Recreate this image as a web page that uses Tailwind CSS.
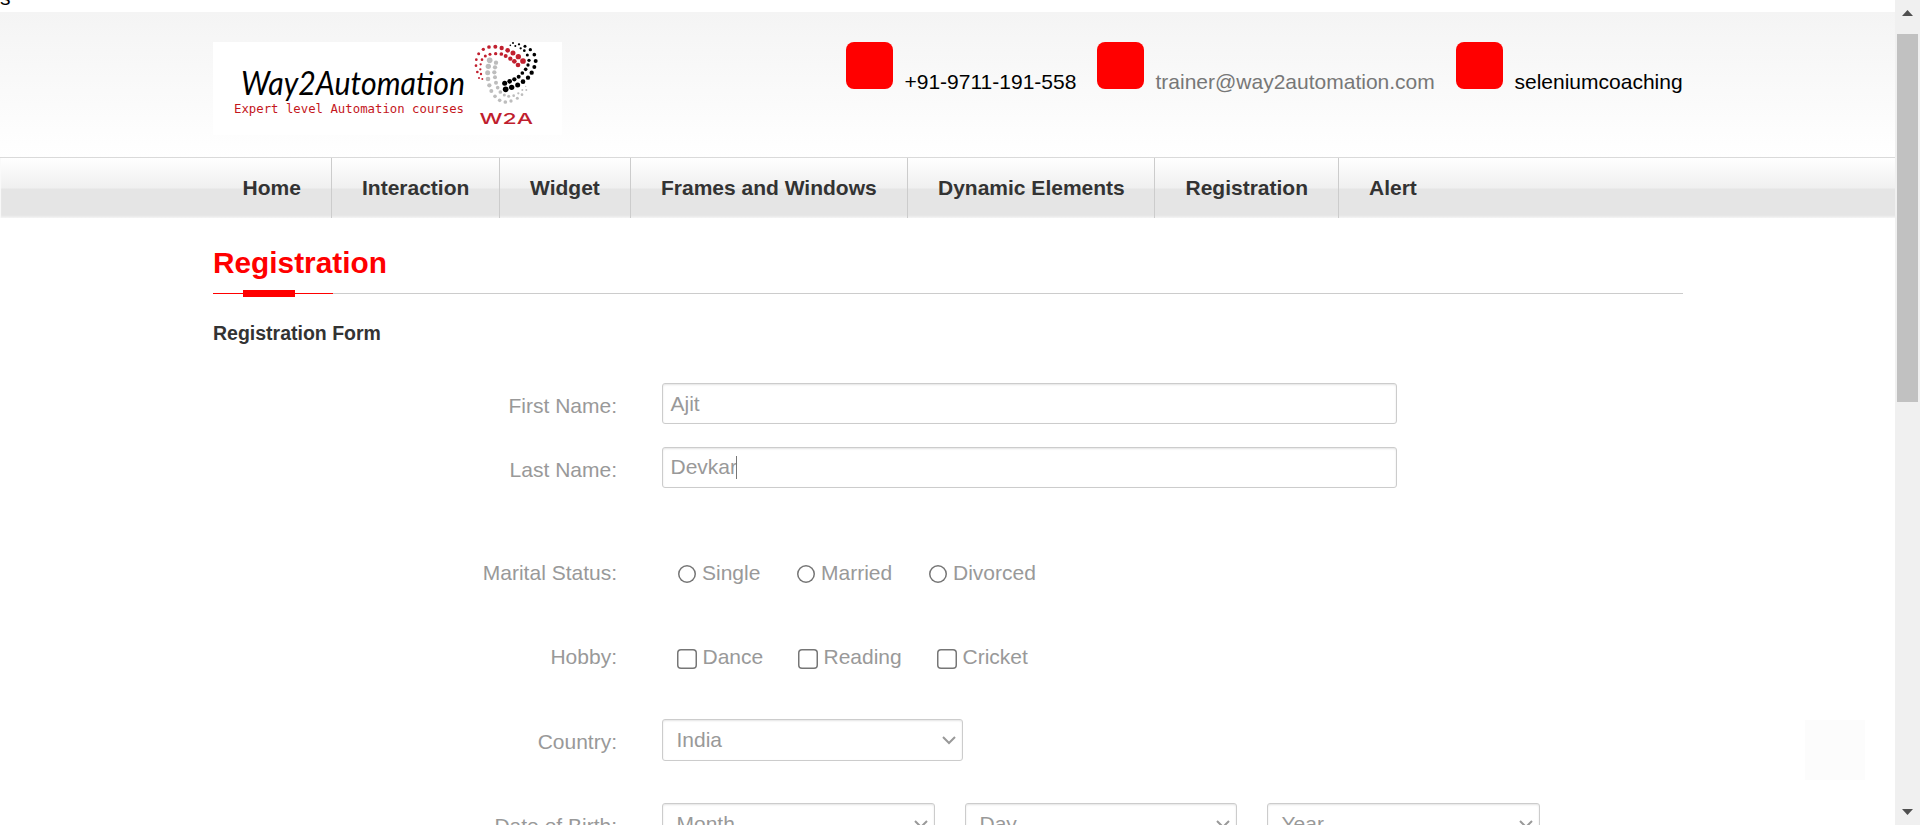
<!DOCTYPE html>
<html lang="en">
<head>
<meta charset="utf-8">
<title>Registration</title>
<script src="https://cdn.jsdelivr.net/npm/@tailwindcss/browser@4"></script>
</head>
<body class="h-[825px] overflow-hidden bg-white font-['Liberation_Sans',Arial,sans-serif] text-[21px] text-[#999]">
<div class="flex h-[825px]">
  <div class="h-[825px] w-[1895px] overflow-hidden">
    <div class="h-3 overflow-hidden"><p class="-mt-[17px] leading-[30px] text-black">s</p></div>

    <header class="h-[145px] bg-linear-to-b from-[#f4f4f4] to-white pr-[212px] pl-[213px] pt-[30px]">
      <div class="flex justify-between">
        <svg class="h-[93px] w-[349px] bg-white" viewBox="0 0 349 93">
          <text x="28" y="53" font-family="Lato, sans-serif" font-style="italic" font-size="32" textLength="224" lengthAdjust="spacingAndGlyphs" fill="#000">Way2Automation</text>
          <text x="21" y="71" font-family="DejaVu Sans Mono, monospace" font-size="12.2" textLength="230" lengthAdjust="spacingAndGlyphs" fill="#c4161c">Expert level Automation courses</text>
          <g id="dots" transform="translate(227 -12) scale(.33333)"></g>
          <text x="266.5" y="82.3" font-family="Inter, sans-serif" font-size="15.2" font-weight="500" textLength="53.5" lengthAdjust="spacingAndGlyphs" fill="#bf1e2e">W2A</text>
        </svg>
        <div class="flex h-[60px] items-start leading-[30px] whitespace-nowrap text-black">
          <div class="flex w-[251px]"><span class="mr-[11.5px] size-[47px] rounded-lg bg-[#f00]"></span><span class="pt-[25px]">+91-9711-191-558</span></div>
          <div class="flex w-[359px]"><span class="mr-[11.5px] size-[47px] rounded-lg bg-[#f00]"></span><span class="pt-[25px] text-[#777]">trainer@way2automation.com</span></div>
          <div class="flex w-[227px]"><span class="mr-[11.5px] size-[47px] shrink-0 rounded-lg bg-[#f00]"></span><span class="pt-[25px]">seleniumcoaching</span></div>
        </div>
      </div>
    </header>

    <nav class="h-[61px] border-t border-[#dadada] bg-linear-[180deg,#fff_0,#f0f0f0_30px,#e5e5e5_31px,#e5e5e5_57px,#f3f3f3_60px] pl-[213px] shadow-[inset_1px_0_1px_#fafafa]">
      <ul class="flex h-[60px] leading-[60px] font-bold whitespace-nowrap text-[#333]">
        <li class="w-[119px] border-r border-[#ccc] pl-[29.5px]">Home</li>
        <li class="w-[168px] border-r border-[#ccc] pl-[30px]">Interaction</li>
        <li class="w-[131px] border-r border-[#ccc] pl-[30px]">Widget</li>
        <li class="w-[277px] border-r border-[#ccc] pl-[30px]">Frames and Windows</li>
        <li class="w-[247px] border-r border-[#ccc] pl-[30px]">Dynamic Elements</li>
        <li class="w-[184px] border-r border-[#ccc] pl-[30.5px]">Registration</li>
        <li class="pl-[30px]">Alert</li>
      </ul>
    </nav>

    <main class="pr-[212px] pl-[213px]">
      <h1 class="pt-[25px] text-[29.8px] leading-[40px] font-bold text-[#f00]">Registration</h1>
      <div class="mt-[7px] flex h-[7px] items-center">
        <span class="h-px w-[30px] bg-[#f00]"></span><span class="h-[7px] w-[52px] bg-[#f00]"></span><span class="h-px w-[38px] bg-[#f00]"></span><span class="h-px flex-1 bg-[#ccc]"></span>
      </div>
      <h2 class="mt-[21px] text-[19.5px] leading-[30px] font-bold text-[#333]">Registration Form</h2>

      <form class="pt-[35px] leading-[30px]">
        <div class="flex h-16">
          <label class="w-[404px] pt-2 text-right">First Name:</label>
          <div class="ml-[45px] h-[41px] w-[735px] rounded-[3px] border border-[#ccc] pl-[7.5px] leading-[39px] shadow-[inset_0_1px_2px_#e4e4e4]">Ajit</div>
        </div>
        <div class="flex h-[111px]">
          <label class="w-[404px] pt-2 text-right">Last Name:</label>
          <div class="ml-[45px] flex h-[41px] w-[735px] items-center rounded-[3px] border border-[#ccc] pl-[7.5px] leading-[39px] shadow-[inset_0_1px_2px_#e4e4e4]"><span class="-mt-0.5">Devkar</span><span class="-mt-px -ml-px h-[23px] w-px bg-[#777]"></span></div>
        </div>
        <div class="flex h-[84px]">
          <label class="w-[404px] text-right">Marital Status:</label>
          <div class="flex pl-[60px]">
            <div class="flex w-[119px]"><span class="mt-[7px] mr-[6px] ml-px size-[18px] rounded-full shadow-[inset_0_0_0_1.5px_#767676]"></span>Single</div>
            <div class="flex w-[132px]"><span class="mt-[7px] mr-[6px] ml-px size-[18px] rounded-full shadow-[inset_0_0_0_1.5px_#767676]"></span>Married</div>
            <div class="flex"><span class="mt-[7px] mr-[6px] ml-px size-[18px] rounded-full shadow-[inset_0_0_0_1.5px_#767676]"></span>Divorced</div>
          </div>
        </div>
        <div class="flex h-[77px]">
          <label class="w-[404px] text-right">Hobby:</label>
          <div class="flex pl-[60px]">
            <div class="flex w-[121px]"><span class="mt-[7px] mr-[5.5px] size-5 rounded-[4px] shadow-[inset_0_0_0_1.5px_#767676]"></span>Dance</div>
            <div class="flex w-[139px]"><span class="mt-[7px] mr-[5.5px] size-5 rounded-[4px] shadow-[inset_0_0_0_1.5px_#767676]"></span>Reading</div>
            <div class="flex"><span class="mt-[7px] mr-[5.5px] size-5 rounded-[4px] shadow-[inset_0_0_0_1.5px_#767676]"></span>Cricket</div>
          </div>
        </div>
        <div class="flex h-[84px]">
          <label class="w-[404px] pt-2 text-right">Country:</label>
          <div class="ml-[45px] flex h-[42px] w-[301px] items-center justify-between rounded-[3px] border border-[#ccc] pr-[6px] pl-[13.5px] shadow-[inset_0_1px_2px_#e4e4e4]">India<svg class="size-[14px]" viewBox="0 0 14 14" fill="none" stroke="#999" stroke-width="2"><path d="M1 4l6 6 6-6"/></svg></div>
        </div>
        <div class="flex h-[84px]">
          <label class="w-[404px] pt-2 text-right">Date of Birth:</label>
          <div class="ml-[45px] flex gap-[30px]">
            <div class="flex h-[42px] w-[273px] items-center justify-between rounded-[3px] border border-[#ccc] pr-[6px] pl-[13.5px] shadow-[inset_0_1px_2px_#e4e4e4]">Month<svg class="size-[14px]" viewBox="0 0 14 14" fill="none" stroke="#999" stroke-width="2"><path d="M1 4l6 6 6-6"/></svg></div>
            <div class="flex h-[42px] w-[272px] items-center justify-between rounded-[3px] border border-[#ccc] pr-[6px] pl-[13.5px] shadow-[inset_0_1px_2px_#e4e4e4]">Day<svg class="size-[14px]" viewBox="0 0 14 14" fill="none" stroke="#999" stroke-width="2"><path d="M1 4l6 6 6-6"/></svg></div>
            <div class="flex h-[42px] w-[273px] items-center justify-between rounded-[3px] border border-[#ccc] pr-[6px] pl-[13.5px] shadow-[inset_0_1px_2px_#e4e4e4]">Year<svg class="size-[14px]" viewBox="0 0 14 14" fill="none" stroke="#999" stroke-width="2"><path d="M1 4l6 6 6-6"/></svg></div>
          </div>
        </div>
      </form>
    </main>
  </div>

  <aside class="flex h-[825px] w-[25px] flex-col items-center bg-[#f0f0f0] pr-px">
    <svg class="mt-[10px] h-[6px] w-[11px]" viewBox="0 0 11 6"><path d="M0 6L5.5 0 11 6z" fill="#505050"/></svg>
    <div class="mt-[18px] h-[368px] w-[21px] bg-[#c1c1c1]"></div>
    <svg class="mt-auto mb-[10px] h-[6px] w-[11px]" viewBox="0 0 11 6"><path d="M0 0h11L5.5 6z" fill="#505050"/></svg>
  </aside>
</div>
<div class="absolute top-[720px] left-[1805px] size-[60px] bg-[#fcfcfc]"></div>

<script>
// Swirl of dots in the logo: x, y, radius per dot, one list per colour.
const swirl = {
  '#c1202f': [[117,144,3],[112,126,4],[108,107,4],[109,89,4],[116,71,4.5],[130,58,5],[147,51,5.5],[166,50,6],[185,54,6.5],[203,61,7],[219,69,7.5],[235,80,8],[249,93,8.5],[127,147,3],[123,132,3.5],[121,118,3.5],[122,103,3.5],[126,89,4],[136,78,4.5],[150,73,4.5],[167,71,5],[184,72,5.5],[197,78,6],[211,86,6.5],[223,94,7],[234,105,7]],
  '#000': [[211,46,2.5],[219,39,3],[237,43,3.5],[255,49,4.5],[271,59,5],[283,74,5.5],[287,93,6],[283,111,6],[275,128,6.5],[264,143,6.5],[249,155,7],[233,165,7.5],[215,172,8],[197,178,8.5],[226,48,3],[242,55,3.5],[253,62,4],[262,75,4.5],[267,91,5],[264,105,5],[257,118,5.5],[247,129,5.5],[236,140,6],[223,148,6.5],[209,154,7],[194,160,7.5]],
  '#bdbdbd': [[149,91,8.5],[145,109,8],[143,128,7.5],[144,147,7],[148,166,6.5],[154,183,6],[165,199,5.5],[179,211,5.5],[196,216,5.5],[213,213,5],[232,205,4.5],[246,194,4],[259,180,3],[257,169,2],[168,98,6.5],[165,112,6.5],[163,127,6.5],[165,142,6],[168,158,6],[173,173,5.5],[181,186,5.5],[193,195,4.5],[206,199,4.5],[221,197,4],[235,190,3.5],[247,180,3]]
};
const dots = document.getElementById('dots');
for (const [fill, list] of Object.entries(swirl))
  for (const [cx, cy, r] of list) {
    const c = document.createElementNS('http://www.w3.org/2000/svg', 'circle');
    c.setAttribute('cx', cx); c.setAttribute('cy', cy); c.setAttribute('r', r); c.setAttribute('fill', fill);
    dots.appendChild(c);
  }
</script>
</body>
</html>
